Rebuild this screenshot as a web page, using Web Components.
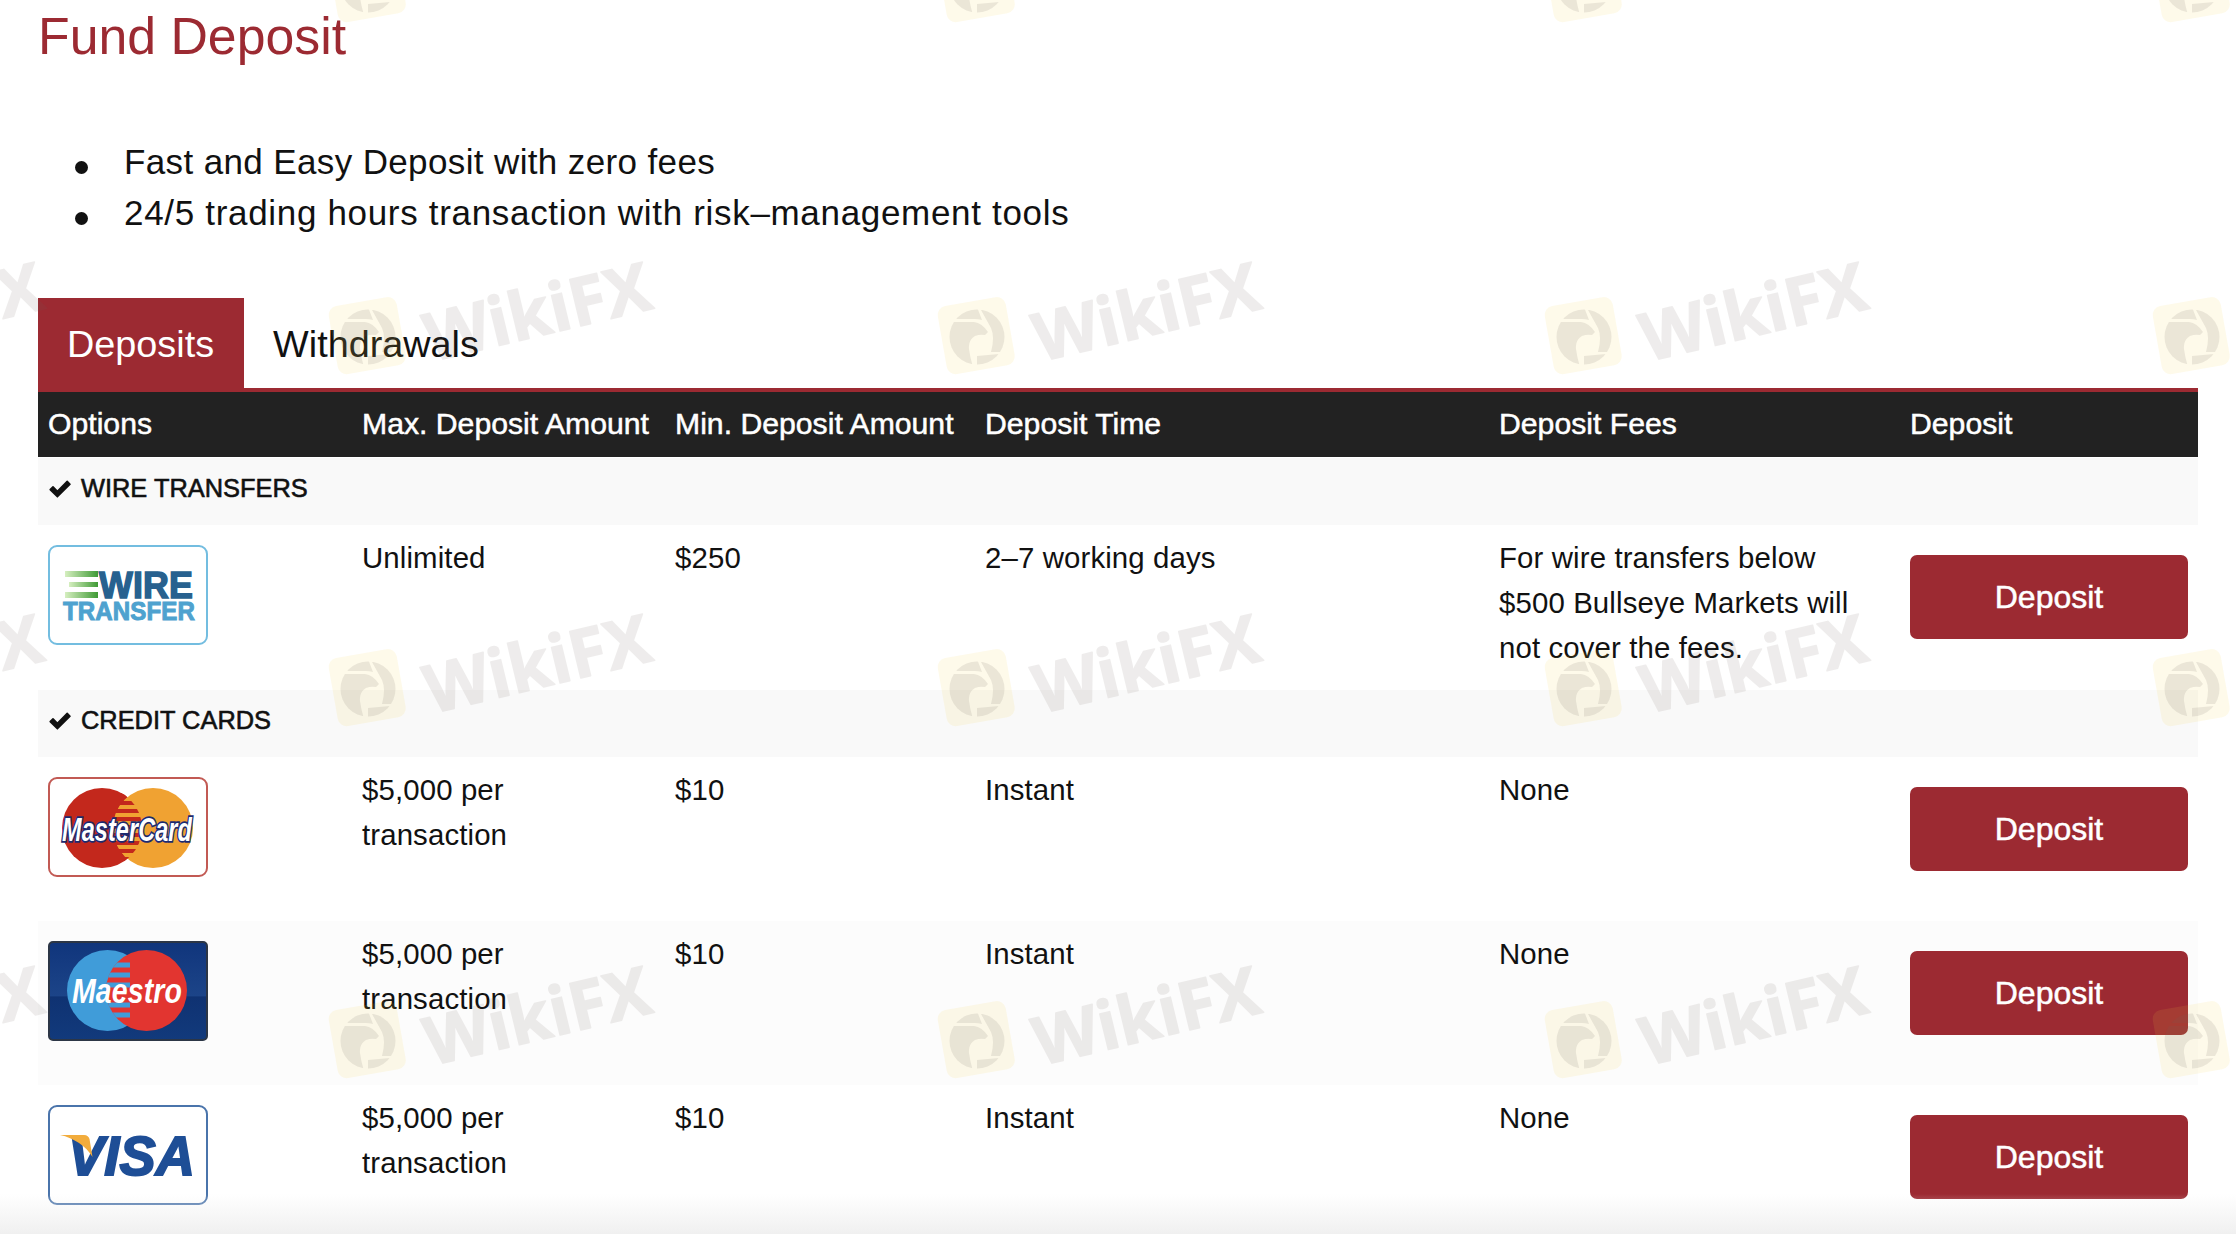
<!DOCTYPE html>
<html><head><meta charset="utf-8">
<style>
html,body{margin:0;height:1234px;overflow:hidden;background:#fff}
body{font-family:"Liberation Sans",Arial,sans-serif;color:#111;position:relative}
</style></head><body>
<fd-page>
  <fd-title>Fund Deposit</fd-title>
  <fd-list>
    <fd-li style="--ls:.37px">Fast and Easy Deposit with zero fees</fd-li>
    <fd-li style="--ls:.68px">24/5 trading hours transaction with risk–management tools</fd-li>
  </fd-list>
  <fd-tabs>
    <fd-tab active>Deposits</fd-tab>
    <fd-tab>Withdrawals</fd-tab>
  </fd-tabs>
  <fd-table>
    <fd-head>
      <span>Options</span><span>Max. Deposit Amount</span><span>Min. Deposit Amount</span><span>Deposit Time</span><span>Deposit Fees</span><span>Deposit</span>
    </fd-head>
    <fd-group>WIRE TRANSFERS</fd-group>
    <fd-row style="--h:165px">
      <fd-logo kind="wire" slot="logo"></fd-logo>
      <span>Unlimited</span><span>$250</span><span>2–7 working days</span>
      <span>For wire transfers below $500 Bullseye Markets will not cover the fees.</span>
    </fd-row>
    <fd-group>CREDIT CARDS</fd-group>
    <fd-row>
      <fd-logo kind="mc" slot="logo"></fd-logo>
      <span>$5,000 per transaction</span><span>$10</span><span>Instant</span><span>None</span>
    </fd-row>
    <fd-row shaded>
      <fd-logo kind="maestro" slot="logo"></fd-logo>
      <span>$5,000 per transaction</span><span>$10</span><span>Instant</span><span>None</span>
    </fd-row>
    <fd-row>
      <fd-logo kind="visa" slot="logo"></fd-logo>
      <span>$5,000 per transaction</span><span>$10</span><span>Instant</span><span>None</span>
    </fd-row>
  </fd-table>
</fd-page>
<fd-watermarks></fd-watermarks>
<fd-fade></fd-fade>
<script>
const COLS='314px 313px 310px 514px 411px 298px';
function def(name,html,init){
  customElements.define(name,class extends HTMLElement{
    constructor(){super();this.attachShadow({mode:'open'}).innerHTML=html;}
    connectedCallback(){if(init)init(this);}
  });
}
def('fd-page',`<style>:host{display:block;padding:0 38px}</style><slot></slot>`);
def('fd-title',`<style>:host{display:block;font-size:51.8px;line-height:72px;color:#9c2a32;padding-bottom:64px}</style><slot></slot>`);
def('fd-list',`<style>:host{display:block;margin-bottom:60px}</style><slot></slot>`);
def('fd-li',`<style>:host{display:flex;align-items:center;font-size:35px;line-height:51px;letter-spacing:var(--ls,0);color:#111;padding-left:86px;position:relative}
 i{position:absolute;left:37px;top:25px;width:13px;height:13px;border-radius:50%;background:#111}</style><i></i><slot></slot>`);
def('fd-tabs',`<style>:host{display:flex;height:90px;border-bottom:4px solid #9c2a32}</style><slot></slot>`);
def('fd-tab',`<style>:host{display:flex;align-items:center;padding:2px 30px 0 29px;box-sizing:border-box;font-size:37.8px;color:#111}
 :host([active]){background:#9c2a32;color:#fff}</style><slot></slot>`);
def('fd-table',`<style>:host{display:block}</style><slot></slot>`);
def('fd-head',`<style>:host{display:grid;grid-template-columns:${COLS};height:65px;box-sizing:border-box;padding-bottom:2px;align-items:center;background:#222;color:#fff;font-size:30.2px;margin-bottom:1px;-webkit-text-stroke:.5px #fff}
 ::slotted(span){padding-left:10px;white-space:nowrap}</style><slot></slot>`);
def('fd-group',`<style>:host{display:flex;align-items:center;gap:9px;height:67px;box-sizing:border-box;padding:0 0 6px 10px;background:#f9f9f9;color:#111;font-size:25.4px;-webkit-text-stroke:.6px #111}
 svg{width:24px;height:20px;flex:none}</style><svg viewBox="0 0 24 20"><path d="M2.200 10.600 5 7.800l4.400 4.400L19.200 2.400 22 5.200 9.400 17.800z" fill="#111" stroke="#111" stroke-width="1.600" stroke-linejoin="round"/></svg><slot></slot>`);
def('fd-row',`<style>:host{display:grid;grid-template-columns:${COLS};height:var(--h,164px);font-size:29.4px;line-height:45px;letter-spacing:.12px;color:#111}
 :host([shaded]){background:#fcfcfc}
 .l{padding:20px 0 0 10px}
 .c{display:contents}
 ::slotted(span){padding:9.5px 20px 0 10px}
 .b{padding:30px 10px 0 10px}
 button{display:block;width:100%;height:84px;border:0;border-radius:7px;background:#9c2a32;color:#fff;font:inherit;font-size:32px;letter-spacing:0;-webkit-text-stroke:.5px #fff;cursor:pointer}
 </style><div class="l"><slot name="logo"></slot></div><div class="c"><slot></slot></div><div class="b"><button>Deposit</button></div>`);
const LOGOS={
wire:`<svg viewBox="0 0 160 100"><defs><linearGradient id="g"><stop offset="0" stop-color="#d6efc0"/><stop offset="1" stop-color="#3f9a35"/></linearGradient></defs>
<rect x="1" y="1" width="158" height="98" rx="8" fill="#fff" stroke="#73bde0" stroke-width="2"/>
<rect x="17" y="26" width="33" height="6" fill="url(#g)"/><rect x="21" y="37" width="29" height="5" fill="url(#g)"/><rect x="17" y="47" width="33" height="6" fill="url(#g)"/>
<text x="51" y="53" font-family="Liberation Sans" font-weight="700" font-size="37" fill="#27618f" stroke="#27618f" stroke-width="1.500" textLength="94" lengthAdjust="spacingAndGlyphs">WIRE</text>
<text x="15" y="75" font-family="Liberation Sans" font-weight="700" font-size="26" fill="#4ea2cf" stroke="#4ea2cf" stroke-width="1" textLength="132" lengthAdjust="spacingAndGlyphs">TRANSFER</text></svg>`,
mc:`<svg viewBox="0 0 160 100"><defs><clipPath id="a"><circle cx="54" cy="51" r="40"/></clipPath></defs>
<rect x="1" y="1" width="158" height="98" rx="8" fill="#fff" stroke="#c25a54" stroke-width="2"/>
<circle cx="54" cy="51" r="40" fill="#c3281c"/><circle cx="105" cy="51" r="40" fill="#f0a232"/>
<g clip-path="url(#a)"><circle cx="105" cy="51" r="40" fill="#f0a232"/>
<path d="M60 18h40M60 26h40M60 34h40M60 42h40M60 50h40M60 58h40M60 66h40M60 74h40M60 82h40" stroke="#c3281c" stroke-width="4"/></g>
<text x="14" y="64" font-family="Liberation Sans" font-style="italic" font-weight="700" font-size="33" fill="#fff" stroke="#1c2a70" stroke-width="3.500" paint-order="stroke" textLength="130" lengthAdjust="spacingAndGlyphs">MasterCard</text></svg>`,
maestro:`<svg viewBox="0 0 160 100"><defs><clipPath id="b"><circle cx="98.500" cy="49.500" r="40.500"/></clipPath><linearGradient id="n" x2="0" y2="1"><stop offset="0" stop-color="#10357c"/><stop offset=".55" stop-color="#1c4488"/><stop offset=".56" stop-color="#0f3272"/><stop offset="1" stop-color="#123a7c"/></linearGradient></defs>
<rect x="1" y="1" width="158" height="98" rx="4" fill="url(#n)" stroke="#2c3646" stroke-width="2"/>
<circle cx="59.500" cy="49.500" r="40.500" fill="#409cd9"/><circle cx="98.500" cy="49.500" r="40.500" fill="#e23530"/>
<g clip-path="url(#b)"><path d="M56 24h26M56 34h26M56 44h26M56 64h26M56 74h26" stroke="#409cd9" stroke-width="5"/></g>
<text x="24" y="62" font-family="Liberation Sans" font-style="italic" font-weight="700" font-size="35" fill="#fff" textLength="110" lengthAdjust="spacingAndGlyphs">Maestro</text></svg>`,
visa:`<svg viewBox="0 0 160 100"><rect x="1" y="1" width="158" height="98" rx="8" fill="#fff" stroke="#4a74ab" stroke-width="2"/>
<text x="20" y="70" font-family="Liberation Sans" font-style="italic" font-weight="700" font-size="56" fill="#1e4e96" stroke="#1e4e96" stroke-width="2" textLength="127" lengthAdjust="spacingAndGlyphs">VISA</text>
<path d="M12 30h24c3 0 5 2 5.500 4l3 18C38 41 26 33 12 30z" fill="#f2ac3c"/></svg>`};
def('fd-logo',`<style>:host{display:block;width:160px;height:100px}svg{display:block;width:160px;height:100px}</style><span id="h"></span>`,el=>{
  el.shadowRoot.getElementById('h').innerHTML=LOGOS[el.getAttribute('kind')];
});
const MARK=(txt)=>`<svg width="420" height="200" viewBox="0 0 420 200" style="display:block;overflow:visible">
<defs><clipPath id="c"><circle r="27.500"/></clipPath></defs>
<g transform="translate(70 100)">
<rect x="-35" y="-36" width="69" height="69" rx="9" transform="rotate(-10)" fill="rgba(248,205,60,.11)"/>
<g clip-path="url(#c)" fill="rgba(110,100,95,.13)">
<path d="M-30-15 -3-15Q5-14 11-5L8-2Q3-3-2-1-9 3-8 12-7 20-4 30L-30 30Z"/>
<path d="M-28-18-3-18Q2-18 5-17L0-30-28-30Z"/>
<path d="M4-27 14-9Q18 0 14 15L30 15 30-27Z"/>
<path d="M0 19 22 17 22 30 0 30Z"/>
</g></g>
${txt?`<text transform="translate(133 125) rotate(-13.500)" font-family="Open Sans" font-weight="700" font-size="67" fill="#6e5f5a" stroke="#6e5f5a" stroke-width="1.500" stroke-linejoin="round" opacity=".11" textLength="230" lengthAdjust="spacingAndGlyphs">WikiFX</text>`:''}
</svg>`;
def('fd-mark',`<style>:host{position:absolute;display:block;width:420px;height:200px}</style><div id="h"></div>`,el=>{
  el.shadowRoot.getElementById('h').innerHTML=MARK(!el.hasAttribute('logo-only'));
  el.style.left=(+el.getAttribute('x')-70)+'px';el.style.top=(+el.getAttribute('y')-100)+'px';
});
def('fd-watermarks',`<style>:host{position:absolute;inset:0;overflow:hidden;pointer-events:none;display:block}</style><slot></slot>`,el=>{
  for(const y of [-15,337,689,1041])for(const x of [-240,368,977,1584,2192]){
    if(x<0&&y<0)continue;
    const m=document.createElement('fd-mark');m.setAttribute('x',x);m.setAttribute('y',y);
    if(y<0||x>2100)m.setAttribute('logo-only','');
    el.appendChild(m);
  }
});
def('fd-fade',`<style>:host{position:absolute;left:0;right:0;bottom:0;height:40px;display:block;pointer-events:none;background:linear-gradient(rgba(240,240,240,0),rgba(240,240,240,1))}</style>`);
</script>
</body></html>
